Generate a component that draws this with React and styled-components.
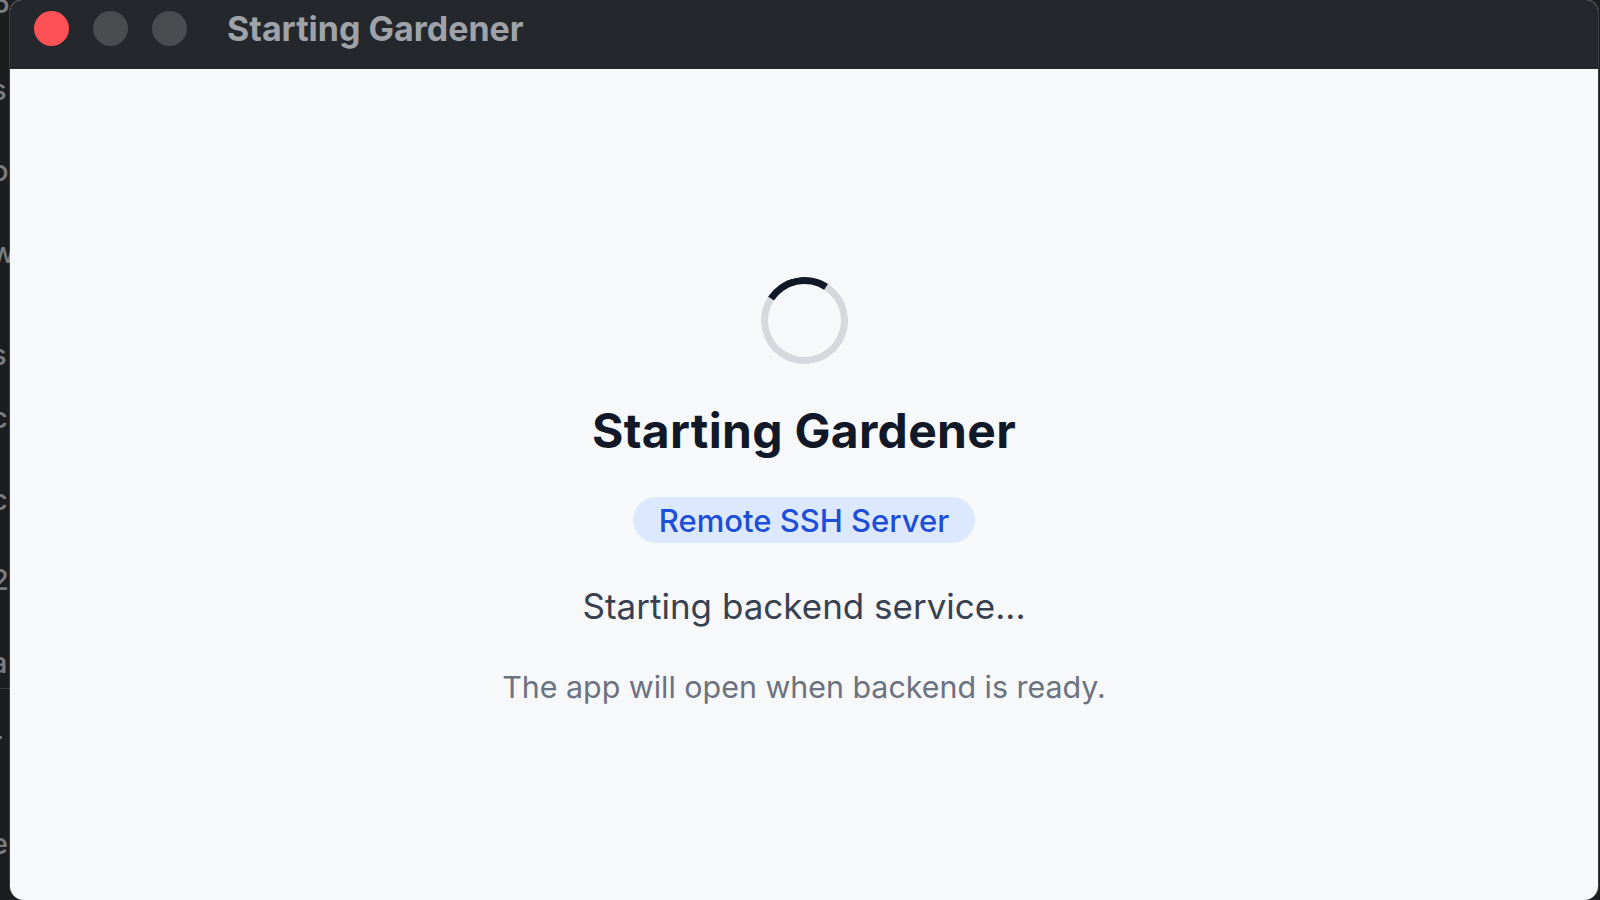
import React from "react";
import styled, { createGlobalStyle } from "styled-components";

const GlobalStyle = createGlobalStyle`
  html, body {
    margin: 0;
    padding: 0;
    height: 100%;
    background: #1c1d1f;
    overflow: hidden;
  }
  #root {
    height: 100%;
  }
`;

// bits of the window behind, peeking out on the left
const backdropLetters = [
  { ch: "P", gap: -5 },
  { ch: "s", gap: 50 },
  { ch: "o", gap: 51 },
  { ch: "w", gap: 52 },
  { ch: "s", gap: 72 },
  { ch: "c", gap: 33 },
  { ch: "c", gap: 52 },
  { ch: "2", gap: 50 },
  { ch: "a", gap: 53 },
  { ch: "r", gap: 39, divider: true },
  { ch: "e", gap: 72 },
];

export default function App() {
  return (
    <>
      <GlobalStyle />
      <Desktop>
        <Backdrop>
          <BackdropList>
            {backdropLetters.map((row, i) => (
              <React.Fragment key={i}>
                {row.divider && <BackdropDivider />}
                <BackdropRow gap={row.gap}>{row.ch}</BackdropRow>
              </React.Fragment>
            ))}
          </BackdropList>
        </Backdrop>
        <Window>
          <TitleBar>
            <Lights>
              <Light color="#fe5155" />
              <Light color="#4a4c50" />
              <Light color="#4a4c50" />
            </Lights>
            <WindowTitle>Starting Gardener</WindowTitle>
          </TitleBar>
          <Content>
            <Spinner />
            <Heading>Starting Gardener</Heading>
            <Badge>Remote SSH Server</Badge>
            <Status>Starting backend service...</Status>
            <Note>The app will open when backend is ready.</Note>
          </Content>
        </Window>
      </Desktop>
    </>
  );
}

const Desktop = styled.div`
  display: flex;
  height: 100vh;
  background: #1c1d1f;
  font-family: Inter, "Noto Sans", sans-serif;
`;

const Backdrop = styled.div`
  width: 10px;
  flex-shrink: 0;
  overflow: hidden;
`;

const BackdropList = styled.div`
  display: flex;
  flex-direction: column;
  margin-left: -9px;
`;

const BackdropRow = styled.div`
  margin-top: ${(p) => p.gap}px;
  height: 30px;
  line-height: 30px;
  font-size: 29px;
  font-weight: 500;
  color: #7c7d80;
`;

const BackdropDivider = styled.div`
  margin-top: 10px;
  margin-bottom: -1px;
  width: 40px;
  height: 1px;
  background: #3a3b3e;
`;

const Window = styled.div`
  flex: 1;
  margin-right: 2px;
  display: flex;
  flex-direction: column;
  border-radius: 12px 12px 14px 14px;
  overflow: hidden;
  background: #f7f8fa;
  box-shadow: 0 0 0 1px rgba(255, 255, 255, 0.14);
`;

const TitleBar = styled.div`
  height: 69px;
  box-sizing: border-box;
  padding: 0 0 12px 24px;
  display: flex;
  align-items: center;
  gap: 40px;
  background: #24272b;
  flex-shrink: 0;
`;

const Lights = styled.div`
  display: flex;
  gap: 24px;
`;

const Light = styled.span`
  width: 35px;
  height: 35px;
  border-radius: 50%;
  background: ${(p) => p.color};
`;

const WindowTitle = styled.div`
  font-size: 34px;
  font-weight: 700;
  color: #9fa3a9;
`;

const Content = styled.main`
  flex: 1;
  display: flex;
  flex-direction: column;
  align-items: center;
  justify-content: center;
  padding-top: 14px;
`;

const Spinner = styled.div`
  width: 87px;
  height: 87px;
  box-sizing: border-box;
  border-radius: 50%;
  border: 7px solid #d5d8dd;
  border-top-color: #111827;
  transform: rotate(-12deg);
`;

const Heading = styled.h1`
  margin: 38px 0 0;
  font-size: 48px;
  line-height: 58px;
  font-weight: 700;
  color: #111827;
  letter-spacing: 0.3px;
`;

const Badge = styled.span`
  margin-top: 37px;
  height: 46px;
  padding: 0 26px;
  display: inline-flex;
  align-items: center;
  border-radius: 23px;
  background: #dbe8fd;
  color: #1d4ed8;
  font-size: 31px;
  font-weight: 500;
`;

const Status = styled.p`
  margin: 42px 0 0;
  font-size: 35px;
  line-height: 42px;
  color: #374151;
`;

const Note = styled.p`
  margin: 41px 0 0;
  font-size: 30.4px;
  line-height: 38px;
  color: #6b7280;
`;
